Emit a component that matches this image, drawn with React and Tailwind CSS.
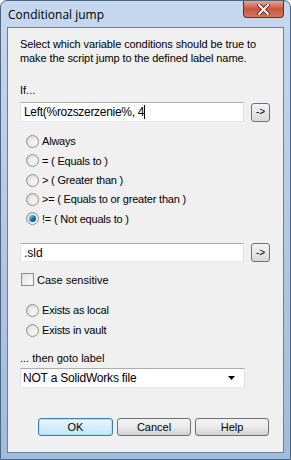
import React, { useState } from 'react'

const body = { fontFamily: '"Liberation Sans", Arial, sans-serif' }

const Radio = ({ checked, label, onClick }) => (
  <div className="flex items-center h-[19.3px] pl-[6px] cursor-default" onClick={onClick}>
    <span
      className="w-[13px] h-[13px] rounded-full border border-[#8f8f8f] flex items-center justify-center bg-gradient-to-br from-[#d5d5d5] to-[#fafafa]"
    >
      {checked ? (
        <span className="w-[7px] h-[7px] rounded-full bg-gradient-to-br from-[#9fdcf5] via-[#1b7db3] to-[#0b3a66]" />
      ) : (
        <span className="w-[7px] h-[7px] rounded-full bg-gradient-to-br from-[#e8e8e8] to-[#f8f8f8]" />
      )}
    </span>
    <span className="ml-[3px] text-[11px] tracking-[-0.2px] text-black">{label}</span>
  </div>
)

const SmallBtn = () => (
  <button className="w-[19px] h-[19px] rounded-[3px] border border-[#707070] bg-gradient-to-b from-[#f4f4f4] to-[#d9d9d9] text-[10px] leading-none text-black flex items-center justify-center">
    -&gt;
  </button>
)

const Btn = ({ children, primary }) => (
  <button
    className={`h-[18px] rounded-[3px] border text-[11px] leading-none text-black flex items-center justify-center ${
      primary
        ? 'w-[75px] border-[#3c7fb1] bg-gradient-to-b from-[#eaf6fd] to-[#bee6fd] shadow-[inset_0_0_0_1px_#a8e3f8]'
        : 'w-[74px] border-[#707070] bg-gradient-to-b from-[#f2f2f2] via-[#ebebeb] to-[#d0d0d0]'
    }`}
  >
    {children}
  </button>
)

const conditions = [
  'Always',
  '= ( Equals to )',
  '> ( Greater than )',
  '>= ( Equals to or greater than )',
  '!= ( Not equals to )',
]

export default function App() {
  const [cond, setCond] = useState(4)
  const [exists, setExists] = useState(null)

  return (
    <div
      className="w-[291px] h-[460px] rounded-t-[7px] border border-[#4f6582] bg-gradient-to-b from-[#c6d8ee] via-[#b2c9e6] to-[#9fbbdd] flex flex-col overflow-hidden"
      style={body}
    >
      {/* title bar */}
      <div className="h-[26px] flex items-start shrink-0">
        <span
          className="ml-[7px] mt-[5px] text-[12px] text-black"
          style={{ fontFamily: '"Open Sans", "Noto Sans", sans-serif' }}
        >
          Conditional jump
        </span>
        <div className="ml-auto mr-[6px] w-[41px] h-[17px] rounded-b-[4px] border border-t-0 border-[#6b2a22] bg-gradient-to-b from-[#e8a493] via-[#c8553f] to-[#d47a5c] flex items-center justify-center">
          <svg width="13" height="11" viewBox="0 0 13 11">
            <path d="M2 1 L11 10 M11 1 L2 10" stroke="#4a1a14" strokeWidth="3.6" strokeLinecap="square" />
            <path d="M2 1 L11 10 M11 1 L2 10" stroke="#ffffff" strokeWidth="2" strokeLinecap="square" />
          </svg>
        </div>
      </div>

      {/* client area */}
      <div className="flex-1 mx-[6px] mb-[6px] border border-[#6f7f92] bg-[#f0f0f0] flex flex-col pl-[12px] pr-[13px] pt-[9px] text-[11px] text-black">
        <p className="leading-[14px] tracking-[-0.1px]">
          Select which variable conditions should be true to make the script jump to the defined label name.
        </p>

        <div className="mt-[18px] leading-[14px]">If...</div>

        <div className="mt-[5px] flex items-center gap-[7px]">
          <div className="w-[226px] h-[20px] bg-white border border-[#abadb3] border-b-[#e3e9ef] border-l-[#e2e3ea] border-r-[#dbdfe6] flex items-center px-[3px] text-[12px] tracking-[-0.3px]">
            Left(%rozszerzenie%, 4<span className="w-px h-[14px] bg-black" />
          </div>
          <SmallBtn />
        </div>

        <div className="mt-[10px] flex flex-col">
          {conditions.map((c, i) => (
            <Radio key={i} label={c} checked={cond === i} onClick={() => setCond(i)} />
          ))}
        </div>

        <div className="mt-[15px] flex items-center gap-[7px]">
          <div className="w-[226px] h-[19px] bg-white border border-[#abadb3] border-b-[#e3e9ef] border-l-[#e2e3ea] border-r-[#dbdfe6] flex items-center px-[3px] text-[12px]">
            .sld
          </div>
          <SmallBtn />
        </div>

        <label className="mt-[10px] flex items-center h-[15px] pl-[1px]">
          <span className="w-[13px] h-[13px] border border-[#8f8f8f] bg-gradient-to-br from-[#dcdcdc] to-[#f8f8f8] flex items-center justify-center">
            <span className="w-[9px] h-[9px] bg-gradient-to-br from-[#e4e4e4] to-[#fbfbfb]" />
          </span>
          <span className="ml-[3px]">Case sensitive</span>
        </label>

        <div className="mt-[13px] flex flex-col gap-[1px]">
          <Radio label="Exists as local" checked={exists === 0} onClick={() => setExists(0)} />
          <Radio label="Exists in vault" checked={exists === 1} onClick={() => setExists(1)} />
        </div>

        <div className="mt-[11px] leading-[14px]">... then goto label</div>

        <div className="mt-[3px] w-[225px] h-[20px] bg-white border border-[#abadb3] border-b-[#e3e9ef] border-l-[#e2e3ea] border-r-[#dbdfe6] flex items-center pl-[2px] pr-[9px] text-[12px] tracking-[-0.2px]">
          <span>NOT a SolidWorks file</span>
          <svg className="ml-auto" width="7" height="4" viewBox="0 0 7 4">
            <path d="M0 0 H7 L3.5 4 Z" fill="#000" />
          </svg>
        </div>

        <div className="mt-auto mb-[16px] flex justify-end gap-[4px] pr-[1px]">
          <Btn primary>OK</Btn>
          <Btn>Cancel</Btn>
          <Btn>Help</Btn>
        </div>
      </div>
    </div>
  )
}
